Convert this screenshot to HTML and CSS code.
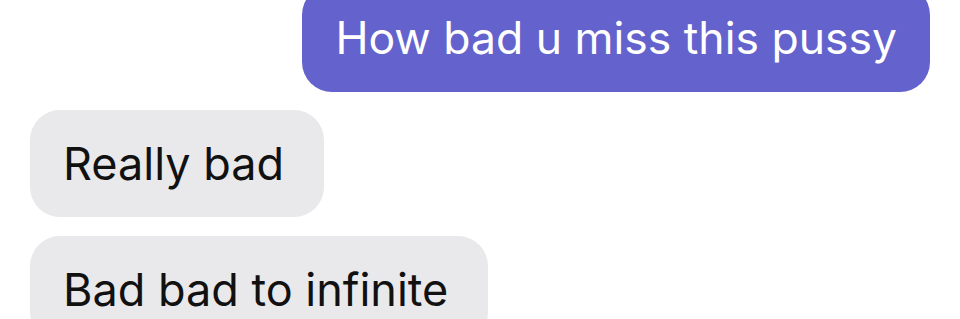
FILE: index.html
```html
<!DOCTYPE html>
<html lang="en">

<head>
  <meta charset="UTF-8">
  <meta name="viewport" content="width=device-width, initial-scale=1.0">
  <title>Messages</title>
  <link rel="stylesheet" href="styles.css">
</head>

<body>

  <div class="thread">
    <div class="bubble sent">How bad u miss this pussy</div>
    <div class="bubble received">Really bad</div>
    <div class="bubble received">Bad bad to infinite</div>
  </div>

</body>

</html>
```

FILE: styles.css
```css
body {
  margin: 0;
  background-color: #fff;
  font-family: Inter, "Noto Sans", sans-serif;
  overflow: hidden;
}

.thread {
  display: flex;
  flex-direction: column;
  align-items: flex-start;
  padding: 0 30px;
  margin-top: -15px;
}

.bubble {
  font-size: 45px;
  line-height: 53px;
  padding: 27px 40px 27px 33px;
  border-radius: 30px;
  color: #111;
  background-color: #e9e9eb;
  margin-bottom: 19px;
}

.sent {
  align-self: flex-end;
  font-size: 44.5px;
  padding: 27px 33px;
  background-color: #6462cd;
  color: #fff;
  margin-bottom: 18px;
}
```
